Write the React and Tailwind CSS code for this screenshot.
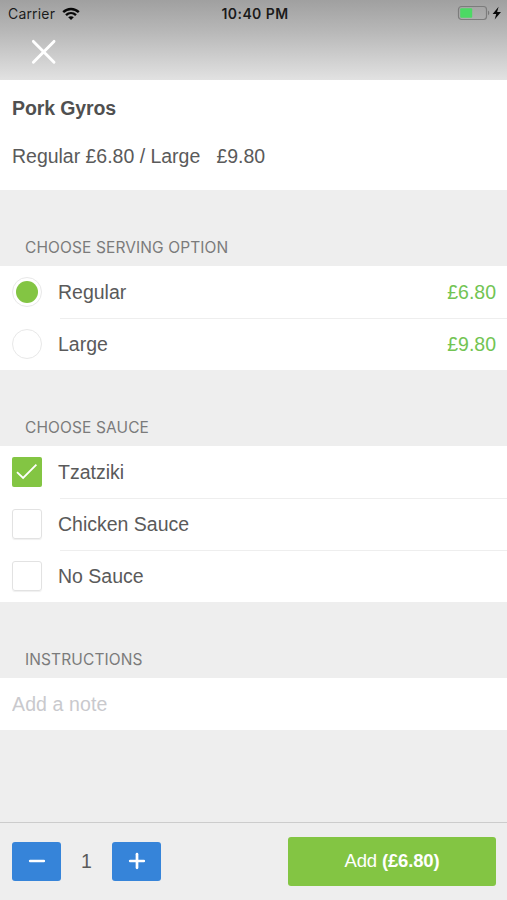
import React from 'react';

const INTER = "font-['Inter','Liberation_Sans',sans-serif]";

function StatusBar() {
  return (
    <div className={`flex h-[27px] items-center text-black/85 ${INTER}`}>
      <div className="flex flex-1 items-center pl-2">
        <span className="w-[47px] whitespace-nowrap text-[14px] leading-[26px] tracking-[0.18px]">Carrier</span>
        <svg className="ml-[6.5px]" width="18" height="14" viewBox="0 0 18 14" fill="none" stroke="#080808" strokeWidth="2.4">
          <path d="M1.2 5.2C5.6 0.9 12.4 0.9 16.8 5.2" />
          <path d="M4 8.2c2.9-2.8 7.1-2.8 10 0" />
          <path d="M9 13 6.2 10.3c1.6-1.5 4-1.5 5.6 0Z" fill="#080808" stroke="none" />
        </svg>
      </div>
      <span className="text-[14px] font-semibold leading-[26px] tracking-[0.42px]">10:40 PM</span>
      <div className="flex flex-1 items-center justify-end pr-[5px]">
        <svg className="-mt-px" width="45" height="16" viewBox="0 0 45 16">
          <rect x="1.5" y="1.5" width="28" height="13" rx="3" fill="none" stroke="#7c7c7c" strokeWidth="1.2" />
          <rect x="3.2" y="3.2" width="12" height="9.6" rx="1" fill="#4cd964" />
          <path d="M31 5.8c1.7.6 1.7 3.8 0 4.4Z" fill="#777" />
          <path d="M41.6 1.8 35.6 9h3.6l-1.5 5.4L44 7h-3.9Z" fill="#080808" />
        </svg>
      </div>
    </div>
  );
}

function SectionTitle({ children }) {
  return (
    <h2 className={`flex h-[76px] items-end pb-[6px] pl-[25px] text-[15.5px] leading-6 tracking-[0.11px] text-[#7b7b7b] ${INTER}`}>
      {children}
    </h2>
  );
}

function Row({ control, label, price, last }) {
  return (
    <div className="flex h-[52px] pl-3">
      <div className="flex w-[46px] shrink-0 items-center">{control}</div>
      <div className="flex flex-1 flex-col">
        <div className="flex flex-1 items-center justify-between pr-[11px]">
          <span>{label}</span>
          {price && <span className="text-[#72c453]">{price}</span>}
        </div>
        {!last && <div className="-mb-px ml-[1.5px] h-px bg-[#eeeeee]" />}
      </div>
    </div>
  );
}

function Radio({ checked }) {
  return (
    <span className="-ml-[0.5px] flex size-[30px] items-center justify-center rounded-full border border-[#e8e8e8]">
      {checked && <span className="size-[22px] rounded-full bg-[#83c543]" />}
    </span>
  );
}

function Checkbox({ checked }) {
  if (checked) {
    return (
      <span className="flex size-[30px] items-center justify-center rounded-[2px] bg-[#83c543]">
        <svg width="30" height="30" viewBox="0 0 30 30" fill="none" stroke="white" strokeWidth="1.8">
          <path d="m5 15.2 6.1 5.8L24.4 7.6" />
        </svg>
      </span>
    );
  }
  return <span className="size-[30px] rounded-[3px] border border-[#e2e2e2] shadow-[0_1px_1px_#00000010]" />;
}

function StepButton({ plus }) {
  return (
    <button className="flex h-[39px] w-[49px] items-center justify-center rounded-[3px] bg-[#3684d9]" aria-label={plus ? 'Increase' : 'Decrease'}>
      <svg width="18" height="18" viewBox="0 0 18 18" stroke="white" strokeWidth="2.7" strokeLinecap="round">
        <path d="M2.2 9h13.6" />
        {plus && <path d="M9 2.2v13.6" />}
      </svg>
    </button>
  );
}

export default function App() {
  return (
    <div className="flex h-[900px] w-[507px] flex-col overflow-hidden bg-[#eeeeee] font-['Liberation_Sans',Arial,sans-serif] text-[19.5px] leading-6 text-[#5a5a5a]">
      <header className="h-20 shrink-0 bg-linear-to-b from-[#a0a0a0] via-[#b8b8b8] via-40% to-[#e2e2e2]">
        <StatusBar />
        <button className="ml-[31px] mt-3 block" aria-label="Close">
          <svg width="26" height="26" viewBox="0 0 26 26" stroke="white" strokeWidth="2.9" strokeLinecap="round">
            <path d="m2.4 2.4 20.6 20.8m0-20.8-20.6 20.8" />
          </svg>
        </button>
      </header>

      <section className="h-[110px] shrink-0 bg-white px-3 pt-4">
        <h1 className="font-bold tracking-[-0.12px] text-[#505050]">Pork Gyros</h1>
        <p className="mt-6 whitespace-pre tracking-[-0.02px]">Regular £6.80 / Large   £9.80</p>
      </section>

      <SectionTitle>CHOOSE SERVING OPTION</SectionTitle>
      <section className="bg-white">
        <Row control={<Radio checked />} label="Regular" price="£6.80" />
        <Row control={<Radio />} label="Large" price="£9.80" last />
      </section>

      <SectionTitle>CHOOSE SAUCE</SectionTitle>
      <section className="bg-white">
        <Row control={<Checkbox checked />} label="Tzatziki" />
        <Row control={<Checkbox />} label="Chicken Sauce" />
        <Row control={<Checkbox />} label="No Sauce" last />
      </section>

      <SectionTitle>INSTRUCTIONS</SectionTitle>
      <div className="flex h-[52px] shrink-0 items-center bg-white px-3">
        <input className="w-full bg-transparent tracking-[0.12px] outline-none placeholder:text-[#c9c9cd]" placeholder="Add a note" />
      </div>

      <footer className="mt-auto flex h-[78px] shrink-0 items-center justify-between border-t border-[#cccccc] pb-px pl-3 pr-[11px]">
        <div className="flex items-center">
          <StepButton />
          <span className="w-[51px] text-center">1</span>
          <StepButton plus />
        </div>
        <button className="h-[49px] w-52 rounded-[3px] bg-[#83c543] text-[18.5px] tracking-[-0.15px] text-white">
          Add <b>(£6.80)</b>
        </button>
      </footer>
    </div>
  );
}
